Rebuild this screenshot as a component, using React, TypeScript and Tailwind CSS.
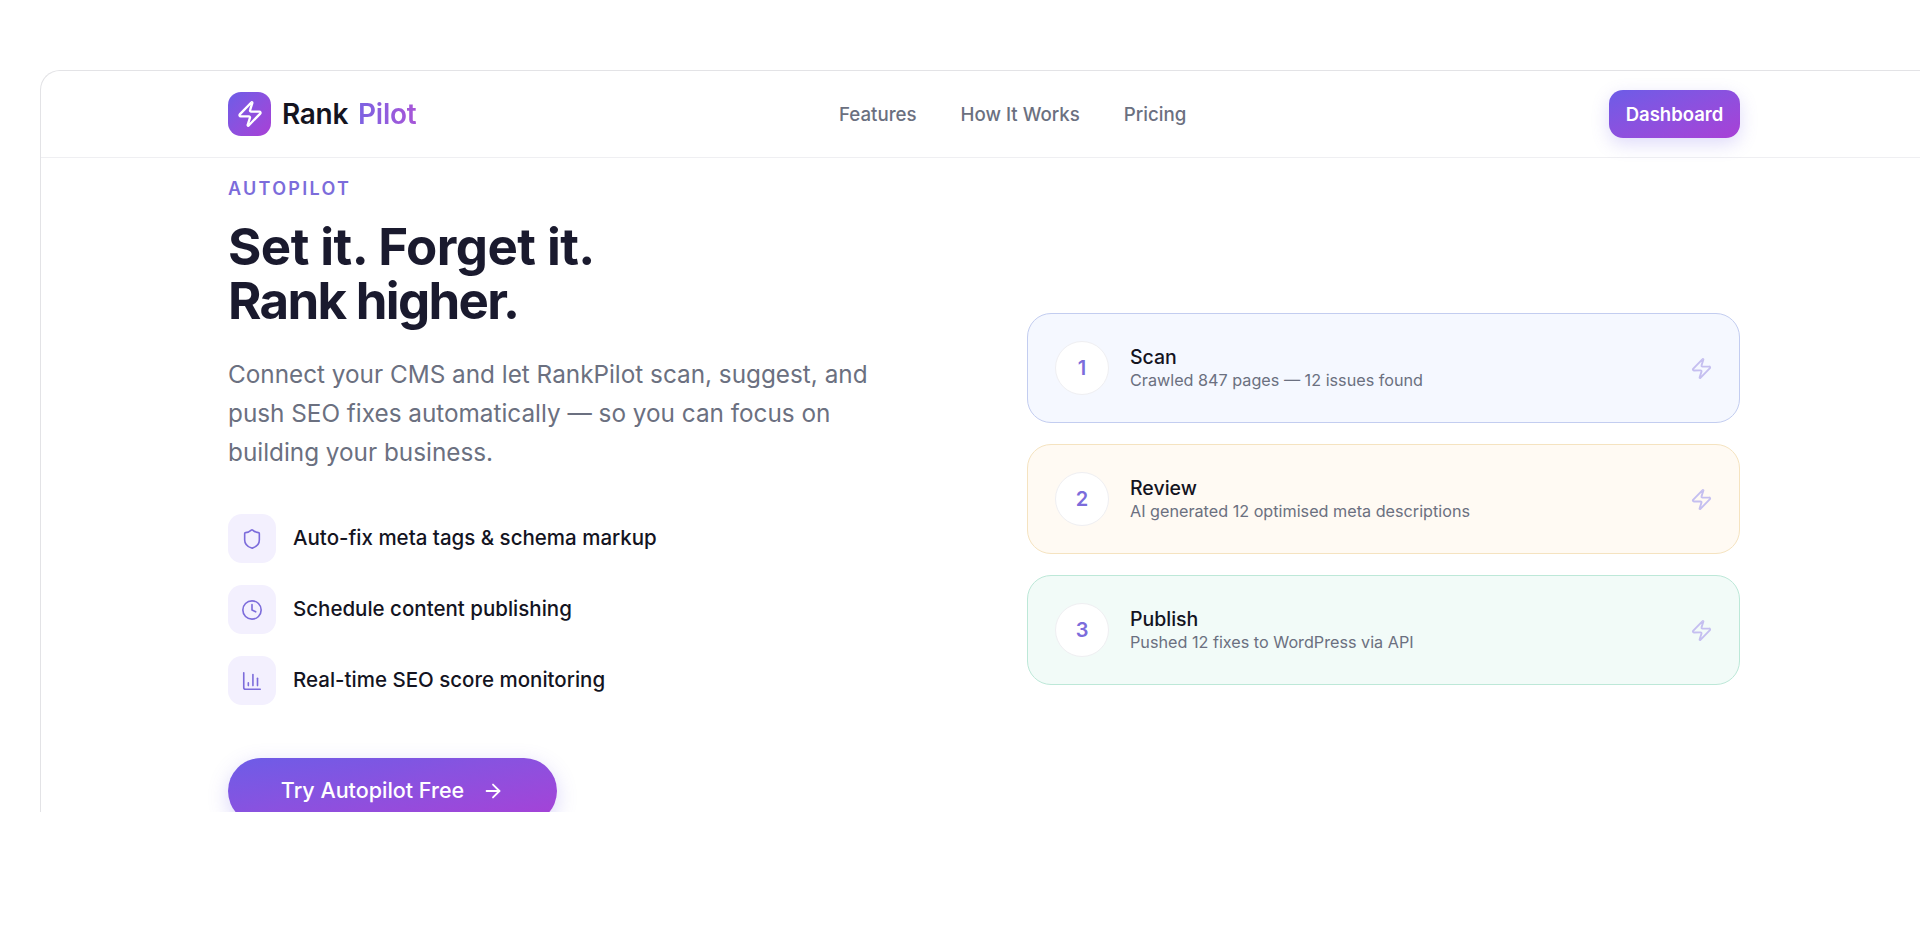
import { ArrowRight, ChartColumn, Clock, Shield, Zap } from "lucide-react";

const features = [
  { icon: Shield, label: "Auto-fix meta tags & schema markup" },
  { icon: Clock, label: "Schedule content publishing" },
  { icon: ChartColumn, label: "Real-time SEO score monitoring" },
];

const steps = [
  { n: 1, title: "Scan", text: "Crawled 847 pages — 12 issues found", card: "bg-[#f5f8ff] border-[#c3cdf0]" },
  { n: 2, title: "Review", text: "AI generated 12 optimised meta descriptions", card: "bg-[#fffaf3] border-[#f5e3c0]" },
  { n: 3, title: "Publish", text: "Pushed 12 fixes to WordPress via API", card: "bg-[#f2fbf8] border-[#bde8d8]" },
];

export default function App() {
  return (
    <div className="min-h-[948px] bg-white pt-[70px] pl-[40px] font-['Inter',sans-serif] text-[#1a1a2e]">
      <div className="h-[742px] overflow-hidden rounded-tl-[20px] border-t border-l border-[#e3e3e6]">
        {/* Nav */}
        <header className="h-[87px] border-b border-[#efeff2]">
          <div className="ml-[187px] flex h-full w-[1512px] items-center justify-between">
            <div className="flex items-center">
              <div className="flex h-[44px] w-[43px] items-center justify-center rounded-[13px] bg-gradient-to-br from-[#6c5ce7] to-[#a83fd6]">
                <Zap className="h-[28px] w-[28px] text-white" strokeWidth={2} />
              </div>
              <span className="ml-[11px] text-[28px] leading-none font-semibold tracking-[-0.3px] text-[#14141f]">Rank</span>
              <span className="ml-[10px] bg-gradient-to-r from-[#7c62e2] to-[#a655d8] bg-clip-text text-[28px] leading-none font-semibold tracking-[-0.3px] text-transparent">Pilot</span>
            </div>
            <nav className="flex items-center gap-[44px] pt-[2px] text-[18.7px] font-medium text-[#6b7080]">
              <a>Features</a>
              <a>How It Works</a>
              <a>Pricing</a>
            </nav>
            <button className="h-[48px] w-[131px] rounded-[14px] bg-gradient-to-br from-[#6c5ce7] to-[#a83fd6] pt-[1px] text-[18.5px] font-semibold text-white shadow-[0_6px_18px_rgba(108,92,231,0.22)]">
              Dashboard
            </button>
          </div>
        </header>

        {/* Hero */}
        <main className="ml-[187px] grid w-[1512px] grid-cols-[713px_713px] items-center justify-between pt-[19px]">
          <div>
            <p className="text-[18px] leading-[24px] font-semibold tracking-[2.3px] text-[#7c6cdb]">AUTOPILOT</p>
            <h1 className="mt-[19px] text-[51px] leading-[54px] font-bold text-[#1a1a2e]">
              <span className="tracking-[-0.55px]">Set it. Forget it.</span>
              <br />
              <span className="tracking-[-1.7px]">Rank higher.</span>
            </h1>
            <p className="mt-[27px] w-[670px] text-[24.3px] leading-[39px] text-[#6b7080]">
              Connect your CMS and let RankPilot scan, suggest, and push SEO fixes automatically — so you can focus on building your business.
            </p>
            <ul className="mt-[42px] flex flex-col gap-[22px]">
              {features.map(({ icon: Icon, label }) => (
                <li key={label} className="flex items-center gap-[17px]">
                  <span className="flex h-[49px] w-[48px] items-center justify-center rounded-[14px] bg-[#f3f0fe]">
                    <Icon className="h-[22px] w-[22px] text-[#7c6cdb]" strokeWidth={1.75} />
                  </span>
                  <span className="text-[20.5px] font-medium text-[#14141f]">{label}</span>
                </li>
              ))}
            </ul>
            <button className="mt-[53px] flex h-[66px] w-[329px] items-center justify-center gap-[18px] rounded-full bg-gradient-to-br from-[#6c5ce7] to-[#a83fd6] pb-[1px] text-[21.5px] font-medium text-white shadow-[0_6px_20px_rgba(108,92,231,0.25)]">
              Try Autopilot Free
              <ArrowRight className="h-[22px] w-[22px]" strokeWidth={2} />
            </button>
          </div>

          <div className="mb-[3px] flex flex-col gap-[21px]">
            {steps.map((s) => (
              <div key={s.n} className={`flex h-[110px] items-center rounded-[24px] border pr-[26px] pl-[27px] ${s.card}`}>
                <span className="flex h-[54px] w-[54px] items-center justify-center rounded-full border border-[#efeff2] bg-white text-[20px] font-semibold text-[#7c6cdb]">
                  {s.n}
                </span>
                <div className="ml-[21px] flex-1">
                  <p className="text-[19.5px] leading-[24px] font-medium text-[#14141f]">{s.title}</p>
                  <p className="pt-[1px] text-[16.2px] leading-[21px] text-[#6b7080]">{s.text}</p>
                </div>
                <Zap className="h-[23px] w-[23px] text-[#c5bff0]" strokeWidth={2} />
              </div>
            ))}
          </div>
        </main>
      </div>
    </div>
  );
}
